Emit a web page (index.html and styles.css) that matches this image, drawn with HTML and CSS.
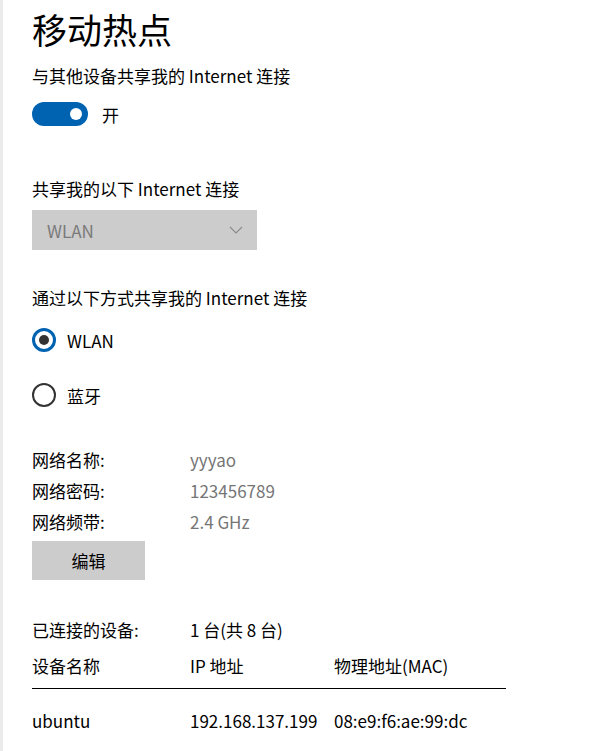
FILE: index.html
```html
<!DOCTYPE html>
<html lang="zh-CN">
<head>
    <meta charset="UTF-8">
    <meta name="viewport" content="width=device-width, initial-scale=1.0">
    <title>移动热点</title>
    <link rel="stylesheet" href="styles.css">
</head>
<body>
    <div class="page">
        <h1 class="title">移动热点</h1>

        <p class="label share-label">与其他设备共享我的 Internet 连接</p>
        <div class="toggle-row">
            <span class="toggle"><span class="knob"></span></span>
            <span class="toggle-text">开</span>
        </div>

        <p class="label source-label">共享我的以下 Internet 连接</p>
        <div class="select">
            <span>WLAN</span>
            <svg class="chevron" width="14" height="8" viewBox="0 0 14 8">
                <path d="M1 1 L7 7 L13 1" fill="none" stroke="#8a8a8a" stroke-width="1.1"/>
            </svg>
        </div>

        <p class="label via-label">通过以下方式共享我的 Internet 连接</p>
        <div class="radio-row first">
            <span class="radio checked"></span>
            <span>WLAN</span>
        </div>
        <div class="radio-row second">
            <span class="radio"></span>
            <span>蓝牙</span>
        </div>

        <div class="info">
            <span>网络名称:</span><span class="value">yyyao</span>
            <span>网络密码:</span><span class="value">123456789</span>
            <span>网络频带:</span><span class="value">2.4 GHz</span>
        </div>
        <button class="button">编辑</button>

        <div class="connected">
            <span>已连接的设备:</span><span>1 台(共 8 台)</span>
        </div>

        <div class="devices">
            <div class="devices-head">
                <span>设备名称</span><span>IP 地址</span><span>物理地址(MAC)</span>
            </div>
            <div class="devices-row">
                <span>ubuntu</span><span>192.168.137.199</span><span>08:e9:f6:ae:99:dc</span>
            </div>
        </div>
    </div>
</body>
</html>
```

FILE: styles.css
```css
/* ---------- page ---------- */

html, body {
    margin: 0;
    padding: 0;
    background: #fff;
}

body {
    font-family: "Noto Sans CJK SC", "Noto Sans", sans-serif;
    font-size: 17px;
    color: #000;
    border-left: 3px solid #ebebeb;
    min-height: 751px;
    box-sizing: border-box;
}

.page {
    padding: 9px 0 0 29px;
}

.title {
    margin: 0;
    font-size: 35px;
    font-weight: normal;
    line-height: 40px;
}

.label {
    margin: 0;
    line-height: 24px;
}

.share-label { margin-top: 15px; }
.source-label { margin-top: 51px; }
.via-label { margin-top: 36px; }

/* ---------- toggle ---------- */

.toggle-row {
    display: flex;
    align-items: center;
    height: 24px;
    margin-top: 14px;
}

.toggle {
    display: flex;
    align-items: center;
    justify-content: flex-end;
    width: 56px;
    height: 24px;
    border-radius: 12px;
    background: #0063b1;
    padding-right: 6px;
    box-sizing: border-box;
}

.knob {
    width: 12px;
    height: 12px;
    border-radius: 50%;
    background: #fff;
}

.toggle-text {
    margin-left: 14px;
}

/* ---------- select ---------- */

.select {
    display: flex;
    align-items: center;
    justify-content: space-between;
    width: 225px;
    height: 40px;
    margin-top: 9px;
    padding: 0 14px 0 15px;
    box-sizing: border-box;
    background: #cccccc;
    color: #7a7a7a;
}

/* ---------- radios ---------- */

.radio-row {
    display: flex;
    align-items: center;
    height: 24px;
    gap: 11px;
}

.radio-row.first { margin-top: 18px; }
.radio-row.second { margin-top: 31px; }

.radio {
    display: flex;
    align-items: center;
    justify-content: center;
    width: 24px;
    height: 24px;
    border-radius: 50%;
    border: 2px solid #333;
    box-sizing: border-box;
}

.radio.checked {
    border: 3px solid #0063b1;
}

.radio.checked::after {
    content: "";
    width: 10px;
    height: 10px;
    border-radius: 50%;
    background: #333;
}

/* ---------- info ---------- */

.info {
    display: grid;
    grid-template-columns: 158px auto;
    grid-auto-rows: 31px;
    align-items: center;
    margin-top: 37px;
}

.value {
    color: #767676;
}

.button {
    display: block;
    width: 113px;
    height: 39px;
    margin-top: 4px;
    border: none;
    background: #cccccc;
    font: inherit;
    color: #000;
    padding: 0;
}

/* ---------- devices ---------- */

.connected {
    display: grid;
    grid-template-columns: 158px auto;
    line-height: 24px;
    margin-top: 38px;
}

.devices {
    width: 474px;
    margin-top: 12px;
}

.devices-head,
.devices-row {
    display: grid;
    grid-template-columns: 158px 144px auto;
    line-height: 24px;
}

.devices-head {
    padding-bottom: 10px;
    border-bottom: 1px solid #000;
}

.devices-row {
    margin-top: 20px;
}
```
